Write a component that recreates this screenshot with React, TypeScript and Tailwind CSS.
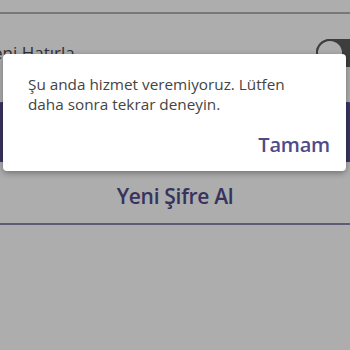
import { useState } from "react";

const App = () => {
  const [remember] = useState(true);

  return (
    <div className="relative w-[350px] h-[350px] overflow-hidden bg-white font-['Open_Sans',sans-serif]">
      {/* page under the dialog */}
      <div className="flex flex-col">
        <div className="h-[12px]" />
        <div className="h-[2px] bg-[#b2b2b2]" />
        <div className="flex items-center justify-between h-[28px] mt-[25px]">
          <span className="ml-[-18px] text-[17px] leading-[22px] text-[#4a4a4a]">Beni Hatırla</span>
          <div className="relative w-[50px] h-[28px] mr-[-16px] rounded-full bg-[#5c5c5c]">
            <div
              className={`absolute top-0 w-[28px] h-[28px] rounded-full bg-white border-2 border-[#5c5c5c] ${
                remember ? "left-0" : "right-0"
              }`}
            />
          </div>
        </div>
        <button className="mx-[-2px] mt-[35px] h-[60px] rounded-[4px] bg-[#564f8f] text-white text-[20px] font-bold">
          Giriş Yap
        </button>
        <div className="flex items-center justify-center h-[52px] mt-[9px] text-[21px] font-semibold text-[#514c8c] tracking-[-0.3px]">
          Yeni Şifre Al
        </div>
        <div className="h-[2px] bg-[#8a87b0]" />
      </div>

      {/* dim layer */}
      <div className="absolute inset-0 bg-black/[0.32]" />

      {/* alert dialog */}
      <div className="absolute left-[3px] top-[54px] w-[343px] h-[117px] rounded-[4px] bg-white shadow-[0_2px_6px_rgba(0,0,0,0.35)] flex flex-col">
        <p className="pl-[25px] pr-[40px] pt-[20px] text-[15.3px] leading-[20px] text-[#444444]">
          Şu anda hizmet veremiyoruz. Lütfen daha sonra tekrar deneyin.
        </p>
        <div className="flex justify-end mt-auto pr-[16px] pb-[12px]">
          <button className="text-[20px] leading-[28px] font-semibold text-[#4f4a88] tracking-[-0.2px]">
            Tamam
          </button>
        </div>
      </div>
    </div>
  );
};

export default App;
